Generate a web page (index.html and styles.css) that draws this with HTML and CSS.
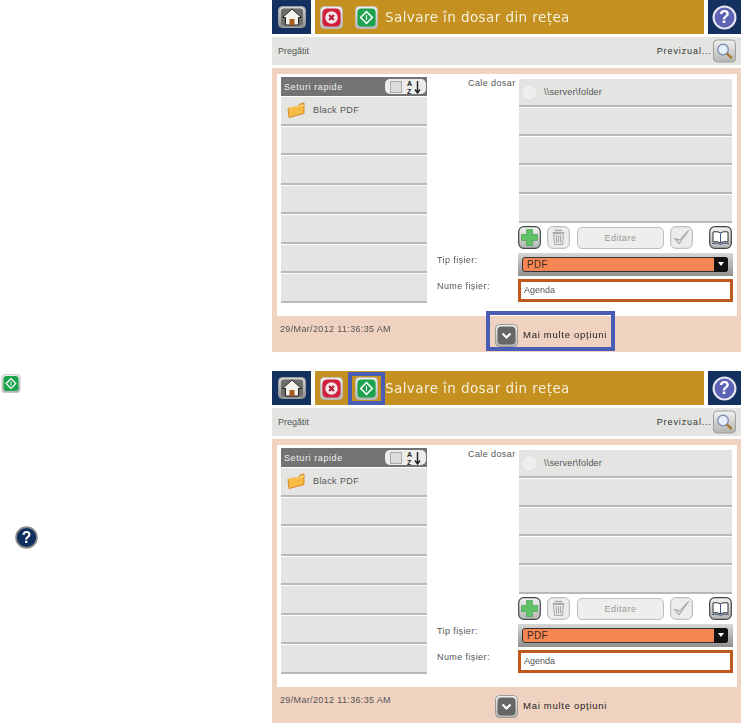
FILE: index.html
```html
<!DOCTYPE html>
<html lang="ro">
<head>
<meta charset="utf-8">
<title>Salvare în dosar din rețea</title>
<link rel="stylesheet" href="styles.css">
</head>
<body>
<svg class="defs" width="0" height="0" aria-hidden="true">
  <defs>
    <linearGradient id="btn" x1="0" y1="0" x2="0" y2="1"><stop offset="0" stop-color="#f2f2f0"/><stop offset="1" stop-color="#b4b4b2"/></linearGradient>
    <linearGradient id="btnd" x1="0" y1="0" x2="0" y2="1"><stop offset="0" stop-color="#d8d8d6"/><stop offset="1" stop-color="#8a8a88"/></linearGradient>
    <symbol id="i-start" viewBox="0 0 24 24">
      <rect x=".5" y=".5" width="23" height="23" rx="4" fill="url(#btn)" stroke="#bdbdbb"/>
      <rect x="2.500" y="2.500" width="19" height="19" rx="4" fill="#1da24e"/>
      <path d="M12 4.800 19.200 12 12 19.200 4.800 12Z" fill="#fff"/>
      <path d="M12 7 17 12 12 17 7 12Z" fill="#1da24e"/>
      <path d="M12 9.500v5" stroke="#fff" stroke-width="1.200"/>
    </symbol>
    <symbol id="i-cancel" viewBox="0 0 24 24">
      <rect x=".5" y=".5" width="23" height="23" rx="4" fill="url(#btn)" stroke="#bdbdbb"/>
      <rect x="2.500" y="2.500" width="19" height="19" rx="5" fill="#cf1f3c"/>
      <circle cx="12" cy="12" r="6.500" fill="#f3e6e8"/>
      <path d="M9.500 9.500l5 5m0-5-5 5" stroke="#b81c36" stroke-width="2.200"/>
    </symbol>
    <symbol id="i-home" viewBox="0 0 28 22">
      <rect x=".5" y=".5" width="27" height="21" rx="4" fill="url(#btnd)" stroke="#9a9ea4"/>
      <rect x="3" y="2.500" width="22" height="17" rx="3" fill="#6d6d6b"/>
      <path d="M14 3 4.500 11.500h3V19h13v-7.500h3Z" fill="#f4f2ea" stroke="#222" stroke-width="1"/>
      <path d="M11.500 19v-6h5v6Z" fill="#a85b1c"/>
    </symbol>
    <symbol id="i-mag" viewBox="0 0 24 24">
      <rect x=".5" y=".5" width="23" height="23" rx="4" fill="url(#btn)" stroke="#9b9b99"/>
      <circle cx="10.500" cy="10.500" r="5.500" fill="#e6eef9" stroke="#7d8fb5" stroke-width="1.400"/>
      <path d="M14.500 14.500 19.500 19.500" stroke="#a9792a" stroke-width="2.400"/>
    </symbol>
    <symbol id="i-folder" viewBox="0 0 18 16">
      <path d="M1 5.500 12 3.500l1-2 4-1v10.500l-15 4Z" fill="#f7bb45" stroke="#cf7f1c" stroke-width=".9"/>
      <path d="M1 5.500 12 3.500l5-.7" fill="none" stroke="#fbdc8e"/>
    </symbol>
    <symbol id="i-sort" viewBox="0 0 14 14">
      <text x="0" y="6.300" class="sort-t">A</text>
      <text x="0" y="13.500" class="sort-t">Z</text>
      <path d="M10.500 1v11M8 9.500l2.500 3.500 2.500-3.500" fill="none" stroke="#222" stroke-width="1.400"/>
    </symbol>
    <symbol id="i-plus" viewBox="0 0 23 23">
      <rect x=".7" y=".7" width="21.600" height="21.600" rx="5" fill="url(#btn)" stroke="#3c4a44" stroke-width="1.200"/>
      <path d="M8.500 3.500h6v5h5v6h-5v5h-6v-5h-5v-6h5Z" fill="#5fc267" stroke="#3c9a4b" stroke-width=".6"/>
    </symbol>
    <symbol id="i-trash" viewBox="0 0 23 23">
      <rect x=".7" y=".7" width="21.600" height="21.600" rx="5" fill="#ececea" stroke="#b2b2b0"/>
      <path d="M6.500 7.500h10l-1 11h-8Z" fill="#e3e3e1" stroke="#aaa"/>
      <path d="M5.500 6.500h12M9.500 9.500v7M11.500 9.500v7M13.500 9.500v7" stroke="#aaa"/>
      <path d="M8 4.500h7" stroke="#aaa" stroke-width="1.500"/>
    </symbol>
    <symbol id="i-check" viewBox="0 0 23 23">
      <rect x=".7" y=".7" width="21.600" height="21.600" rx="5" fill="#ececea" stroke="#b2b2b0"/>
      <path d="M4.500 12.500 9 18 18.500 4.500 9.500 14Z" fill="#dededc" stroke="#9a9a98"/>
    </symbol>
    <symbol id="i-book" viewBox="0 0 23 23">
      <rect x=".7" y=".7" width="21.600" height="21.600" rx="5" fill="url(#btn)" stroke="#3f4347" stroke-width="1.200"/>
      <path d="M11.500 7c-2-1.500-5-1.500-7.500-1v10c2.500-.5 5.500-.5 7.500 1 2-1.500 5-1.500 7.500-1V6c-2.500-.5-5.500-.5-7.500 1Z" fill="#fff" stroke="#333"/>
      <path d="M11.500 7v10M3 17.500c3-.5 6-.5 8.500 1 2.500-1.500 5.500-1.500 8.500-1" fill="none" stroke="#43558a"/>
    </symbol>
    <symbol id="i-more" viewBox="0 0 23 23">
      <rect x=".5" y=".5" width="22" height="22" rx="4" fill="url(#btn)" stroke="#9a9a98"/>
      <rect x="2.500" y="2.500" width="18" height="18" rx="4" fill="#666"/>
      <path d="M7.500 9.500 11.500 13.500 15.500 9.500" fill="none" stroke="#fff" stroke-width="2.200"/>
    </symbol>
  </defs>
</svg>

<main class="page">
  <aside class="notes">
    <svg class="note-start"><use href="#i-start"/></svg>
    <svg class="note-help" viewBox="0 0 22 22">
      <circle cx="11" cy="11" r="10" fill="#10305f" stroke="#8d8d8d" stroke-width="1.600"/>
      <text x="11" y="16" text-anchor="middle" class="help-note-t">?</text>
    </svg>
  </aside>

  <div class="screens">
    <section class="screen">
      <header class="top">
        <div class="nav-home"><svg class="ic-home"><use href="#i-home"/></svg></div>
        <div class="title-bar">
          <svg class="ic-cancel"><use href="#i-cancel"/></svg>
          <div class="start-box"><svg class="ic-start"><use href="#i-start"/></svg></div>
          <h1 class="title">Salvare în dosar din rețea</h1>
        </div>
        <div class="nav-help">
          <svg class="ic-help" viewBox="0 0 24 24"><circle cx="12" cy="12" r="10.500" fill="#5f63b5" stroke="#e6e6f0" stroke-width="2"/><text x="12" y="17.500" text-anchor="middle" class="help-t">?</text></svg>
        </div>
      </header>
      <div class="status">
        <span>Pregătit</span>
        <span class="preview">Previzual...<svg class="ic-mag"><use href="#i-mag"/></svg></span>
      </div>
      <div class="panel">
        <div class="card">
          <div class="quick">
            <div class="quick-head">
              <span>Seturi rapide</span>
              <span class="sorter"><i class="box"></i><svg class="ic-sort"><use href="#i-sort"/></svg></span>
            </div>
            <div class="row row-q"><svg class="ic-folder"><use href="#i-folder"/></svg>Black PDF</div>
            <div class="row"></div><div class="row"></div><div class="row"></div><div class="row"></div><div class="row"></div><div class="row"></div>
          </div>
          <div class="form">
            <div class="field field-path">
              <label class="lbl">Cale dosar</label>
              <div class="paths">
                <div class="row row-p"><i class="radio"></i>\\server\folder</div>
                <div class="row"></div><div class="row"></div><div class="row"></div><div class="row"></div>
                <div class="tools">
                  <svg class="tool"><use href="#i-plus"/></svg>
                  <svg class="tool"><use href="#i-trash"/></svg>
                  <span class="edit">Editare</span>
                  <svg class="tool"><use href="#i-check"/></svg>
                  <svg class="tool tool-end"><use href="#i-book"/></svg>
                </div>
              </div>
            </div>
            <div class="field field-type">
              <label class="lbl">Tip fișier:</label>
              <div class="select-wrap"><div class="select"><span>PDF</span><b class="drop"></b></div></div>
            </div>
            <div class="field field-name">
              <label class="lbl">Nume fișier:</label>
              <div class="input">Agenda</div>
            </div>
          </div>
        </div>
        <div class="foot">
          <span class="time">29/Mar/2012 11:36:35 AM</span>
          <span class="more more-hl"><svg class="ic-more"><use href="#i-more"/></svg>Mai multe opțiuni</span>
        </div>
      </div>
    </section>

    <section class="screen">
      <header class="top">
        <div class="nav-home"><svg class="ic-home"><use href="#i-home"/></svg></div>
        <div class="title-bar">
          <svg class="ic-cancel"><use href="#i-cancel"/></svg>
          <div class="start-box start-hl"><svg class="ic-start"><use href="#i-start"/></svg></div>
          <h1 class="title">Salvare în dosar din rețea</h1>
        </div>
        <div class="nav-help">
          <svg class="ic-help" viewBox="0 0 24 24"><circle cx="12" cy="12" r="10.500" fill="#5f63b5" stroke="#e6e6f0" stroke-width="2"/><text x="12" y="17.500" text-anchor="middle" class="help-t">?</text></svg>
        </div>
      </header>
      <div class="status">
        <span>Pregătit</span>
        <span class="preview">Previzual...<svg class="ic-mag"><use href="#i-mag"/></svg></span>
      </div>
      <div class="panel">
        <div class="card">
          <div class="quick">
            <div class="quick-head">
              <span>Seturi rapide</span>
              <span class="sorter"><i class="box"></i><svg class="ic-sort"><use href="#i-sort"/></svg></span>
            </div>
            <div class="row row-q"><svg class="ic-folder"><use href="#i-folder"/></svg>Black PDF</div>
            <div class="row"></div><div class="row"></div><div class="row"></div><div class="row"></div><div class="row"></div><div class="row"></div>
          </div>
          <div class="form">
            <div class="field field-path">
              <label class="lbl">Cale dosar</label>
              <div class="paths">
                <div class="row row-p"><i class="radio"></i>\\server\folder</div>
                <div class="row"></div><div class="row"></div><div class="row"></div><div class="row"></div>
                <div class="tools">
                  <svg class="tool"><use href="#i-plus"/></svg>
                  <svg class="tool"><use href="#i-trash"/></svg>
                  <span class="edit">Editare</span>
                  <svg class="tool"><use href="#i-check"/></svg>
                  <svg class="tool tool-end"><use href="#i-book"/></svg>
                </div>
              </div>
            </div>
            <div class="field field-type">
              <label class="lbl">Tip fișier:</label>
              <div class="select-wrap"><div class="select"><span>PDF</span><b class="drop"></b></div></div>
            </div>
            <div class="field field-name">
              <label class="lbl">Nume fișier:</label>
              <div class="input">Agenda</div>
            </div>
          </div>
        </div>
        <div class="foot">
          <span class="time">29/Mar/2012 11:36:35 AM</span>
          <span class="more"><svg class="ic-more"><use href="#i-more"/></svg>Mai multe opțiuni</span>
        </div>
      </div>
    </section>
  </div>
</main>
</body>
</html>
```

FILE: styles.css
```css
* { box-sizing: border-box; }
html, body { margin: 0; padding: 0; background: #fff; }
body { width: 741px; height: 723px; overflow: hidden; font: 9px/12px "Liberation Sans", Arial, sans-serif; color: #555; }
.defs { position: absolute; }
svg { display: block; flex: none; }

.page { display: flex; height: 723px; filter: blur(.3px); }
.notes { width: 272px; flex: none; padding-top: 374px; }
.note-start { width: 20px; height: 19px; margin-left: 1px; }
.note-help { width: 23px; height: 23px; margin: 133px 0 0 15px; }
.help-note-t { font: 700 15px "Liberation Sans", sans-serif; fill: #fff; }

.screens { flex: 1; display: flex; flex-direction: column; gap: 19px; }
.screen { height: 352px; display: flex; flex-direction: column; }

.top { height: 34px; display: flex; flex: none; }
.nav-home { width: 39px; background: #14305e; display: flex; align-items: center; justify-content: center; margin-right: 4px; }
.ic-home { width: 28px; height: 22px; }
.title-bar { width: 389px; background: #c4901f; display: flex; align-items: center; padding-left: 5px; }
.ic-cancel { width: 23px; height: 23px; margin-right: 5px; }
.start-box { width: 37px; height: 33px; border: 4px solid transparent; display: flex; align-items: center; justify-content: center; }
.start-hl { border-color: #4a5db5; }
.ic-start { width: 23px; height: 23px; }
.title { margin: 0; font: 400 13.500px/18px "DejaVu Sans", Verdana, sans-serif; letter-spacing: .42px; color: #f6efdc; white-space: nowrap; }
.nav-help { width: 33px; margin-left: 4px; background: #14305e; display: flex; align-items: center; justify-content: center; }
.ic-help { width: 25px; height: 25px; }
.help-t { font: 700 17px "Liberation Sans", sans-serif; fill: #fff; }

.status { height: 28px; margin-top: 3px; background: #e4e4e2; display: flex; align-items: center; justify-content: space-between; padding: 0 5px 0 6px; flex: none; }
.preview { display: flex; align-items: center; gap: 1px; letter-spacing: .9px; color: #333; }
.ic-mag { width: 23px; height: 24px; }

.panel { margin-top: 3px; height: 284px; background: #f0d2c0; padding: 6px 4px 0 5px; display: flex; flex-direction: column; flex: none; }
.card { height: 242px; background: #fff; display: flex; padding: 3px 3px 0 4px; flex: none; }

.quick { width: 146px; display: flex; flex-direction: column; gap: 1px; flex: none; }
.quick-head { height: 19px; background: #737373; color: #f1f1f1; display: flex; align-items: center; justify-content: space-between; padding: 0 1px 0 3px; letter-spacing: .6px; }
.sorter { width: 41px; height: 15px; background: #ececea; border-radius: 5px; display: flex; align-items: center; padding-left: 5px; gap: 5px; }
.box { width: 12px; height: 12px; background: #dcdcda; border: 1px solid #aaa; }
.ic-sort { width: 14px; height: 14px; }
.sort-t { font: 700 7px "Liberation Sans", sans-serif; fill: #222; }

.row { height: 28px; background: #e4e4e2; border-bottom: 2px solid #b8b8b6; flex: none; }
.quick .row { height: 28.500px; }
.row-q { display: flex; align-items: center; padding-left: 6px; gap: 8px; letter-spacing: .4px; color: #555; }
.ic-folder { width: 18px; height: 17px; }

.form { margin-left: 10px; flex: 1; display: flex; flex-direction: column; }
.field { display: flex; }
.lbl { width: 81px; flex: none; letter-spacing: .4px; color: #555; }
.field-path .lbl { padding-left: 31px; }
.paths { width: 215px; padding-top: 2px; }
.paths .row { margin: 0 1px 1px; }
.row-p { display: flex; align-items: center; padding-left: 2px; gap: 6px; color: #555; letter-spacing: .2px; }
.radio { width: 17px; height: 17px; border-radius: 50%; background: #eeeeec; border: 1px solid #dcdcda; }

.tools { display: flex; align-items: center; height: 23px; margin-top: 3px; gap: 6px; }
.tool { width: 23px; height: 23px; }
.tool-end { margin-left: 10px; }
.edit { width: 87px; height: 22px; border: 1px solid #bdbdbb; border-radius: 5px; background: #eeeeec; text-align: center; line-height: 20px; color: #999; letter-spacing: .5px; margin-left: 1px; }

.field-type { margin-top: 4px; height: 23px; }
.field-type .lbl, .field-name .lbl { padding-top: 1px; }
.select-wrap { width: 215px; height: 23px; background: linear-gradient(#d8d8d6, #8f8f8d); padding: 4px 5px 4px 4px; }
.select { height: 15px; background: #f68654; border: 1px solid #333; border-radius: 3px; display: flex; justify-content: space-between; align-items: center; padding-left: 4px; color: #3a2a20; font-size: 10px; letter-spacing: .3px; }
.drop { width: 14px; height: 15px; margin-right: -1px; background: #111; border-radius: 0 3px 3px 0; position: relative; }
.drop::after { content: ""; position: absolute; left: 4px; top: 5px; border: 3px solid transparent; border-top: 4px solid #fff; border-bottom: 0; }
.field-name { margin-top: 3px; height: 23px; }
.input { width: 215px; height: 23px; border: 3px solid #bf5a1c; background: #fff; padding-left: 3px; line-height: 17px; color: #555; }

.foot { flex: 1; position: relative; display: flex; padding-left: 3px; padding-top: 7px; }
.time { letter-spacing: .35px; color: #555; }
.more { position: absolute; left: 209px; top: -5px; width: 129px; height: 40px; border: 4px solid transparent; display: flex; align-items: center; gap: 5px; padding: 8px 0 0 5px; font-size: 9.500px; letter-spacing: .72px; color: #222; white-space: nowrap; }
.more-hl { border-color: #4a5db5; }
.ic-more { width: 23px; height: 23px; }
```
